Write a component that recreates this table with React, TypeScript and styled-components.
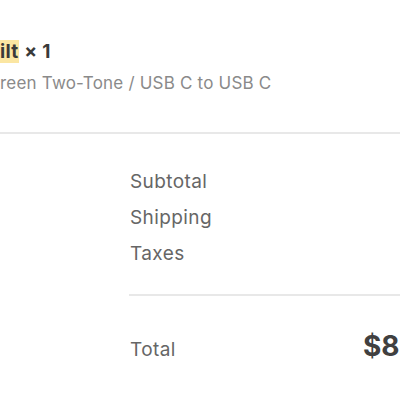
import React from "react";
import styled, { createGlobalStyle } from "styled-components";

const Global = createGlobalStyle`
  html, body { margin: 0; padding: 0; background: #fff; overflow: hidden; }
  body { font-family: Inter, "Liberation Sans", Arial, sans-serif; }
`;

const Page = styled.div`
  width: 400px;
  height: 400px;
  overflow: hidden;
  background: #fff;
`;

const Product = styled.section`
  padding: 40px 0 38px;
  border-bottom: 2px solid #e8e8e8;
  display: flex;
  flex-direction: column;
  gap: 8px;
`;

const Title = styled.div`
  font-size: 19px;
  font-weight: 700;
  color: #3a3a3a;
  line-height: 24px;
  letter-spacing: 0.3px;
`;

const Mark = styled.mark`
  background: #fbe6a2;
  color: inherit;
  padding: 0 1px 0 0;
`;

const Variant = styled.div`
  font-size: 17px;
  color: #8a8a8a;
  line-height: 22px;
  letter-spacing: 0.2px;
`;

const Summary = styled.section`
  margin-left: 129px;
  width: 334px;
  padding-top: 37px;
`;

const Lines = styled.div`
  display: flex;
  flex-direction: column;
  gap: 14px;
  padding-bottom: 29px;
  border-bottom: 2px solid #e8e8e8;
`;

const Line = styled.div`
  display: flex;
  justify-content: space-between;
  align-items: baseline;
  font-size: 19px;
  line-height: 22px;
  color: #666;
  letter-spacing: 0.4px;
  padding-left: 1px;
`;

const TotalRow = styled(Line)`
  padding-top: 39px;
`;

const Amount = styled.span`
  font-size: 28px;
  font-weight: 700;
  color: #404040;
  letter-spacing: 0;
`;

export default function App() {
  return (
    <Page>
      <Global />
      <Product>
        <Title>
          <Mark>ilt</Mark> × 1
        </Title>
        <Variant>reen Two-Tone / USB C to USB C</Variant>
      </Product>
      <Summary>
        <Lines>
          <Line>Subtotal</Line>
          <Line>Shipping</Line>
          <Line>Taxes</Line>
        </Lines>
        <TotalRow>
          <span>Total</span>
          <Amount>$85.00</Amount>
        </TotalRow>
      </Summary>
    </Page>
  );
}
